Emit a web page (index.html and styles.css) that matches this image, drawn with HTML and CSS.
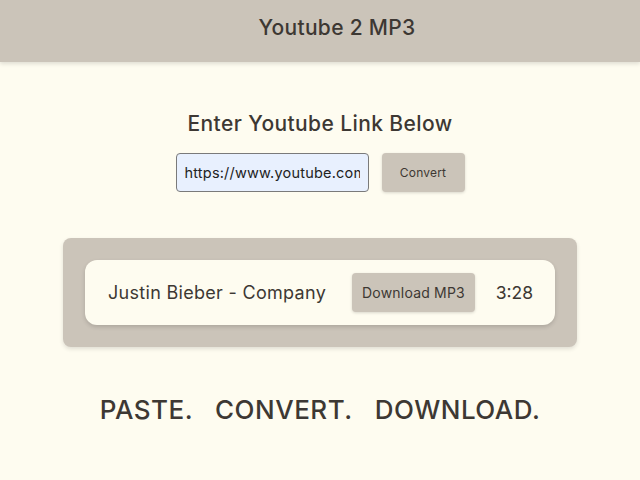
FILE: index.html
```html
<!DOCTYPE html>
<html>
<head>
<meta charset="utf-8">
<link rel="stylesheet" href="styles.css">
</head>
<body>
<header class="topbar"><h1 class="brand">Youtube 2 MP3</h1></header>
<main class="main">
  <h2 class="prompt">Enter Youtube Link Below</h2>
  <form class="form">
    <input class="url" type="text" value="https://www.youtube.com/watch?v=gdx7gN1UyX0">
    <button class="btn convert" type="button">Convert</button>
  </form>
  <section class="results">
    <div class="item">
      <span class="title">Justin Bieber - Company</span>
      <button class="btn dl" type="button">Download MP3</button>
      <span class="time">3:28</span>
    </div>
  </section>
  <p class="tagline"><span>PASTE.</span><span>CONVERT.</span><span>DOWNLOAD.</span></p>
</main>
</body>
</html>
```
FILE: styles.css
```css
* { box-sizing: border-box; }
html, body { margin: 0; height: 100%; }
body {
  background: #fefcf0;
  font-family: Inter, "Open Sans", "DejaVu Sans", sans-serif;
  color: #3d3833;
}
.topbar {
  height: 62px;
  background: #cbc4b9;
  display: flex;
  align-items: center;
  justify-content: center;
  padding: 0 0 7px 34px;
  box-shadow: 0 2px 4px rgba(0,0,0,0.12);
}
.brand {
  margin: 0;
  font-size: 21px;
  font-weight: 500;
  letter-spacing: 0.3px;
}
.main {
  display: flex;
  flex-direction: column;
  align-items: center;
}
.prompt {
  margin: 47px 0 0;
  font-size: 21px;
  font-weight: 500;
  line-height: 30px;
  letter-spacing: 0.4px;
}
.form {
  margin-top: 14px;
  display: flex;
  gap: 13px;
}
.url {
  width: 193px;
  height: 39px;
  background: #e8f0fe;
  border: 1px solid #7a7a7a;
  border-radius: 4px;
  padding: 0 8px;
  font-family: inherit;
  font-size: 14.5px;
  letter-spacing: 0.2px;
  color: #222;
}
.btn {
  border: none;
  background: #cbc4b9;
  border-radius: 4px;
  font-family: inherit;
  color: #3d3833;
  box-shadow: 0 1px 3px rgba(0,0,0,0.15);
}
.convert {
  width: 83px;
  height: 39px;
  font-size: 12px;
  letter-spacing: 0.2px;
}
.results {
  margin-top: 46px;
  width: 514px;
  height: 109px;
  background: #cbc4b9;
  border-radius: 8px;
  padding: 22px;
  box-shadow: 0 2px 4px rgba(0,0,0,0.12);
}
.item {
  height: 65px;
  background: #fefcf0;
  border-radius: 12px;
  display: flex;
  align-items: center;
  padding: 0 22px 0 23px;
  box-shadow: 0 2px 4px rgba(0,0,0,0.15);
}
.title {
  font-size: 18px;
  letter-spacing: 0.3px;
  width: 244px;
}
.dl {
  width: 123px;
  height: 39px;
  font-size: 14px;
  letter-spacing: 0.2px;
}
.time {
  margin-left: auto;
  font-size: 17.5px;
}
.tagline {
  margin: 47px 0 0;
  font-size: 26px;
  font-weight: 500;
  letter-spacing: 0.5px;
  display: flex;
  gap: 22px;
}
```
